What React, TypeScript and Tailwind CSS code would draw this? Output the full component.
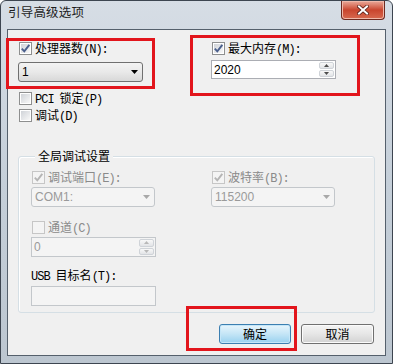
import React from "react";

const CJK = "font-['Noto_Sans_CJK_SC',sans-serif]";
const MONO = "font-['Liberation_Mono',monospace]";
const SANS = "font-['Liberation_Sans','Noto_Sans_CJK_SC',sans-serif]";

function Label({
  prefix,
  text,
  keyPart,
  disabled,
}: {
  prefix?: string;
  text: string;
  keyPart?: string;
  disabled?: boolean;
}) {
  return (
    <span className={`flex items-baseline whitespace-nowrap leading-none ${disabled ? "text-[#8a8a8a]" : "text-black"}`}>
      {prefix && <span className={`${MONO} mr-[6px] text-[12px] tracking-[-1px]`}>{prefix}</span>}
      <span className={`${CJK} text-[12px]`}>{text}</span>
      {keyPart && <span className={`${MONO} text-[12px] tracking-[-1px]`}>{keyPart}</span>}
    </span>
  );
}

function Check({ checked, disabled }: { checked?: boolean; disabled?: boolean }) {
  return (
    <span
      className={`flex h-[13px] w-[13px] shrink-0 items-center justify-center border p-[1px] ${
        disabled ? "border-[#c6c6c6] bg-[#f4f4f4]" : "border-[#8e8f8f] bg-white"
      }`}
    >
      <span
        className={`flex h-full w-full items-center justify-center ${
          disabled ? "bg-[#f4f4f4]" : "bg-gradient-to-br from-[#d0d3d8] to-[#f8f8f8]"
        }`}
      >
        {checked && (
          <svg width="11" height="11" viewBox="0 0 11 11" className="-m-[1px]">
            <path
              d="M1.8 5.6 L4.3 8.3 L9.3 1.8"
              fill="none"
              stroke={disabled ? "#b5b5b5" : "#4a5f8c"}
              strokeWidth="1.9"
            />
          </svg>
        )}
      </span>
    </span>
  );
}

function CheckRow({
  prefix,
  text,
  keyPart,
  checked,
  disabled,
}: {
  prefix?: string;
  text: string;
  keyPart?: string;
  checked?: boolean;
  disabled?: boolean;
}) {
  return (
    <div className="flex h-[17px] items-center gap-[3px] pl-[1px]">
      <Check checked={checked} disabled={disabled} />
      <Label prefix={prefix} text={text} keyPart={keyPart} disabled={disabled} />
    </div>
  );
}

function Combo({ value, disabled, width = "w-[125px]" }: { value: string; disabled?: boolean; width?: string }) {
  return (
    <div
      className={`flex h-[20px] ${width} items-center justify-between rounded-[3px] border pl-[3px] pr-[4px] ${
        disabled
          ? "border-[#c3c7cb] bg-[#f4f4f4] text-[#9a9a9a]"
          : "border-[#707070] bg-gradient-to-b from-[#f3f3f3] via-[#e9e9e9] to-[#d8d8d8] text-black"
      }`}
    >
      <span className={`${SANS} text-[12px] leading-none`}>{value}</span>
      <svg width="7" height="4" viewBox="0 0 7 4">
        <path d="M0 0H7L3.5 4Z" fill={disabled ? "#a8a8a8" : "#000"} />
      </svg>
    </div>
  );
}

function Arrow({ up, disabled }: { up?: boolean; disabled?: boolean }) {
  return (
    <div className="flex flex-1 items-center justify-center rounded-[2px] border border-[#cfd3d8] bg-gradient-to-b from-[#f8f8f8] to-[#e2e4e7]">
      <svg width="5" height="3" viewBox="0 0 5 3">
        <path d={up ? "M2.5 0L5 3H0Z" : "M0 0H5L2.5 3Z"} fill={disabled ? "#b8b8b8" : "#4c4c4c"} />
      </svg>
    </div>
  );
}

function SpinBox({ value, disabled, height = "h-[19px]" }: { value: string; disabled?: boolean; height?: string }) {
  return (
    <div
      className={`flex ${height} w-[125px] items-stretch border ${
        disabled ? "border-[#c3c7cb] bg-[#f4f4f4] text-[#9a9a9a]" : "border-[#abadb3] bg-white text-black"
      }`}
    >
      <div className={`flex flex-1 items-center pl-[2px] ${SANS} text-[12px] leading-none`}>{value}</div>
      <div className="flex w-[16px] flex-col gap-[1px] py-[1px] pr-[1px]">
        <Arrow up disabled={disabled} />
        <Arrow disabled={disabled} />
      </div>
    </div>
  );
}

function Button({ text, primary }: { text: string; primary?: boolean }) {
  return (
    <div
      className={`flex h-[20px] items-center justify-center rounded-[3px] border ${
        primary
          ? "w-[72px] border-[#3c7fb1] bg-gradient-to-b from-[#e8f5fc] via-[#c4e5f6] to-[#98d1ef] shadow-[inset_0_0_0_1px_#c5e6f8]"
          : "w-[73px] border-[#707070] bg-gradient-to-b from-[#f4f4f4] via-[#e6e6e6] to-[#d2d2d2] shadow-[inset_0_0_0_1px_#fbfbfb]"
      }`}
    >
      <span className={`${CJK} text-[12px] leading-none text-black`}>{text}</span>
    </div>
  );
}

function CloseButton() {
  return (
    <div className="flex h-[19px] w-[44px] items-center justify-center rounded-b-[4px] border border-t-0 border-[#6e2a20] bg-gradient-to-b from-[#e9a99a] via-[#c9452e] to-[#d7694f] shadow-[inset_0_0_0_1px_#f0b9aa]">
      <svg width="12" height="10" viewBox="0 0 12 10">
        <path d="M2 1.5L10 8.5M10 1.5L2 8.5" stroke="#5a1f17" strokeWidth="3.6" strokeLinecap="square" />
        <path d="M2 1.5L10 8.5M10 1.5L2 8.5" stroke="#ffffff" strokeWidth="2" strokeLinecap="square" />
      </svg>
    </div>
  );
}

function RedBox({ className }: { className: string }) {
  return <div className={`pointer-events-none absolute border-[3px] border-[#e2151c] ${className}`} />;
}

export default function App() {
  return (
    <div className="relative h-[364px] w-[393px] overflow-hidden bg-white">
      <div className="flex h-full w-full flex-col rounded-t-[6px] border border-[#3d4550] bg-gradient-to-b from-[#d6dde5] via-[#c5cfd9] to-[#bcc6d0]">
        <div className="flex h-[28px] shrink-0 items-start justify-between pl-[7px] pr-[7px]">
          <span className={`${CJK} mt-[5px] text-[12.5px] leading-none tracking-[0.2px] text-[#1e1e1e]`}>
            引导高级选项
          </span>
          <CloseButton />
        </div>

        <div className="mx-[6px] flex h-[327px] flex-col border border-[#55606c] bg-[#f0f0f0]">
          <div className="flex pl-[10px] pt-[10px]">
            <div className="flex w-[193px] flex-col">
              <CheckRow text="处理器数" keyPart="(N):" checked />
              <div className="mt-[5px]">
                <Combo value="1" />
              </div>
              <div className="mt-[8px] flex flex-col">
                <CheckRow prefix="PCI" text="锁定" keyPart="(P)" />
                <CheckRow text="调试" keyPart="(D)" />
              </div>
            </div>
            <div className="flex flex-col">
              <CheckRow text="最大内存" keyPart="(M):" checked />
              <div className="mt-[3px]">
                <SpinBox value="2020" />
              </div>
            </div>
          </div>

          <div className="mx-[10px] mt-[32px] flex h-[157px] flex-col rounded-[3px] border border-[#d5dfe5] pl-[12px] shadow-[inset_1px_1px_0_#ffffff]">
            <div className="-mt-[9px] ml-[4px] flex h-[16px] w-fit items-center bg-[#f0f0f0] px-[3px]">
              <span className={`${CJK} text-[12px] leading-none text-black`}>全局调试设置</span>
            </div>
            <div className="mt-[5px] flex">
              <div className="flex w-[180px] flex-col">
                <CheckRow text="调试端口" keyPart="(E):" checked disabled />
                <div className="mt-[1px]">
                  <Combo value="COM1:" disabled width="w-[124px]" />
                </div>
                <div className="mt-[12px]">
                  <CheckRow text="通道" keyPart="(C)" disabled />
                </div>
                <div className="mt-[1px]">
                  <SpinBox value="0" disabled height="h-[20px]" />
                </div>
                <div className="mt-[10px] flex h-[17px] items-center">
                  <Label prefix="USB" text="目标名" keyPart="(T):" />
                </div>
                <div className="mt-[2px] h-[20px] w-[125px] border border-[#c3c7cb] bg-[#f4f4f4]" />
              </div>
              <div className="flex flex-col">
                <CheckRow text="波特率" keyPart="(B):" checked disabled />
                <div className="mt-[1px]">
                  <Combo value="115200" disabled width="w-[124px]" />
                </div>
              </div>
            </div>
          </div>

          <div className="mt-[11px] flex justify-end gap-[10px] pr-[11px]">
            <Button text="确定" primary />
            <Button text="取消" />
          </div>
        </div>
      </div>

      <RedBox className="left-[6px] top-[38px] h-[51px] w-[149px]" />
      <RedBox className="left-[190px] top-[35px] h-[61px] w-[170px]" />
      <RedBox className="left-[186px] top-[306px] h-[45px] w-[111px]" />
    </div>
  );
}
